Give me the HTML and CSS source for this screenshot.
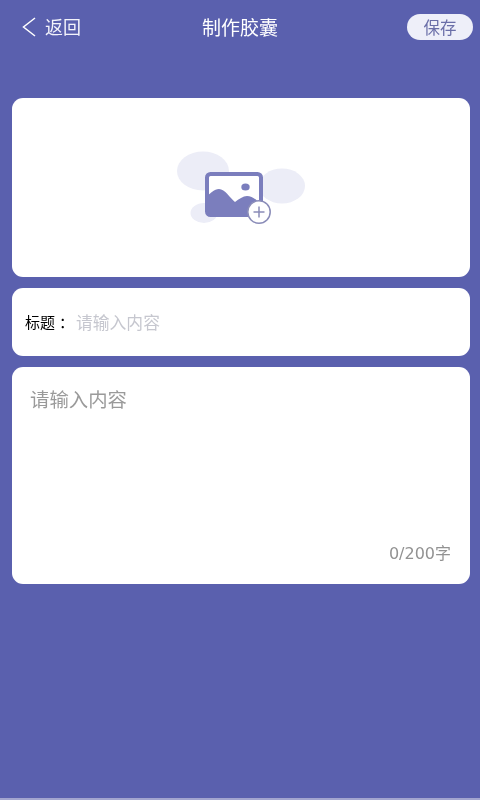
FILE: index.html
```html
<!DOCTYPE html>
<html lang="zh">
<head>
<meta charset="utf-8">
<title>制作胶囊</title>
<link rel="stylesheet" href="styles.css">
</head>
<body>
<div class="page">
  <header class="topbar">
    <div class="back">
      <svg class="chevron" viewBox="0 0 14 20" width="14" height="20"><path d="M13 1 L1.500 10 L13 19" fill="none" stroke="#fff" stroke-width="1.500"/></svg>
      <span class="back-text soft">返回</span>
    </div>
    <div class="title soft">制作胶囊</div>
    <div class="save"><span class="soft">保存</span></div>
  </header>
  <main class="content">
    <section class="card photo">
      <svg class="photo-icon" viewBox="0 0 130 75" width="130" height="75">
        <ellipse cx="27" cy="21" rx="26" ry="19.500" fill="#ecedf7"/>
        <ellipse cx="106" cy="36" rx="23" ry="17.500" fill="#ecedf7"/>
        <ellipse cx="28" cy="63" rx="13.500" ry="10" fill="#ecedf7"/>
        <rect x="31" y="24" width="54" height="41" rx="3.500" fill="#fff" stroke="#7b7ebd" stroke-width="4"/>
        <path d="M31 46 C35 43 38 39 43 39 C49 39 54 48 59 52 C63 49 67 46 71 46 C76 46 81 50 85 55 L85 66 L31 66 Z" fill="#7b7ebd"/>
        <ellipse cx="69.500" cy="37" rx="4.200" ry="3.500" fill="#7b7ebd"/>
        <circle cx="83" cy="62" r="11.200" fill="#fff" stroke="#8a8cb8" stroke-width="1.500"/>
        <path d="M83 56.500 V67.500 M77.500 62 H88.500" fill="none" stroke="#8a8cb8" stroke-width="1.500"/>
      </svg>
    </section>
    <section class="card title-row">
      <span class="label soft">标题<span class="colon">：</span></span>
      <span class="placeholder-small soft">请输入内容</span>
    </section>
    <section class="card body-card">
      <div class="placeholder-large soft">请输入内容</div>
      <div class="counter soft">0/200字</div>
    </section>
  </main>
  <div class="edge"></div>
</div>
</body>
</html>
```

FILE: styles.css
```css
* { box-sizing: border-box; }
html, body { margin: 0; padding: 0; }
body {
  background: #5a60ae;
  font-family: "DejaVu Sans", "Noto Sans CJK SC", sans-serif;
}
.page {
  width: 480px;
  height: 800px;
  display: flex;
  flex-direction: column;
  overflow: hidden;
}
.soft { will-change: opacity; }
.topbar {
  height: 98px;
  padding: 14px 7px 0 7px;
  display: grid;
  grid-template-columns: 1fr auto 1fr;
  align-items: start;
  color: #fff;
}
.back {
  display: flex;
  align-items: center;
  height: 26px;
  gap: 9px;
  padding-left: 15px;
}
.chevron { display: block; }
.back-text { font-size: 18px; line-height: 26px; color: #f3f3fb; margin-top: 2px; }
.title { font-size: 19px; line-height: 28px; }
.save {
  justify-self: end;
  width: 66px;
  height: 26px;
  border-radius: 13px;
  background: #eeeff9;
  color: #6a6ea8;
  font-size: 16.500px;
  line-height: 30px;
  text-align: center;
}
.save .soft { display: inline-block; }
.content {
  flex: 1;
  padding: 0 10px 0 12px;
  display: flex;
  flex-direction: column;
  gap: 11px;
}
.card {
  background: #fff;
  border-radius: 11px;
}
.photo {
  height: 179px;
  display: flex;
  align-items: center;
  justify-content: center;
}
.photo-icon { display: block; }
.title-row {
  height: 68px;
  padding-left: 13px;
  display: flex;
  align-items: center;
}
.label { font-size: 15px; width: 52px; color: #000; margin-bottom: 2px; white-space: nowrap; }
.colon { display: inline-block; padding-left: 4px; }
.placeholder-small { font-size: 16.800px; color: #c6c7cf; margin-left: -1px; }
.body-card {
  height: 217px;
  padding: 21px 19px 19px 19px;
  display: flex;
  flex-direction: column;
  justify-content: space-between;
}
.placeholder-large { font-size: 19.400px; line-height: 26px; color: #9a9a9a; margin-left: -1px; }
.counter { font-size: 16px; line-height: 22px; color: #929292; text-align: right; }
.edge { height: 2px; background: #a3a5cf; }
```
